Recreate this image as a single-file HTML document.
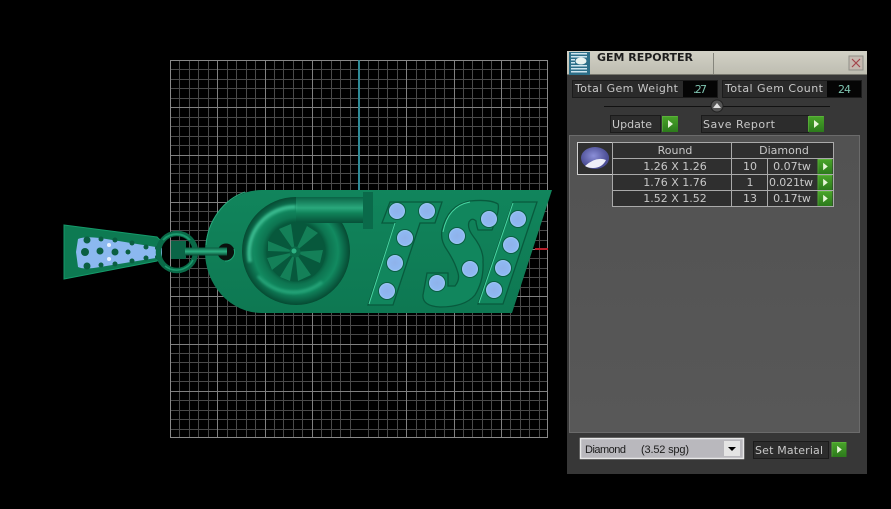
<!DOCTYPE html>
<html><head><meta charset="utf-8"><style>
html,body{margin:0;padding:0;background:#000;width:891px;height:509px;overflow:hidden}
svg{display:block}
text{font-family:"DejaVu Sans","Liberation Sans",sans-serif;font-size:11px;fill:#c8c8c8}
</style></head><body>
<svg width="891" height="509" viewBox="0 0 891 509" xmlns="http://www.w3.org/2000/svg">
<defs>
<linearGradient id="key" x1="0" y1="0" x2="0" y2="1"><stop offset="0" stop-color="#11855c"/><stop offset="1" stop-color="#0e7852"/></linearGradient>
<linearGradient id="pipe" x1="0" y1="0" x2="0" y2="1"><stop offset="0" stop-color="#0b6446"/><stop offset=".42" stop-color="#2aa87c"/><stop offset=".62" stop-color="#108259"/><stop offset="1" stop-color="#075138"/></linearGradient>
<linearGradient id="bar" x1="0" y1="0" x2="0" y2="1"><stop offset="0" stop-color="#0a5c40"/><stop offset=".5" stop-color="#2eb283"/><stop offset="1" stop-color="#084a33"/></linearGradient>
<radialGradient id="torus" cx="296" cy="251" r="54" gradientUnits="userSpaceOnUse"><stop offset=".54" stop-color="#075a3d"/><stop offset=".62" stop-color="#0d7450"/><stop offset=".78" stop-color="#128a60"/><stop offset=".92" stop-color="#0a6144"/><stop offset="1" stop-color="#064a32"/></radialGradient>
<radialGradient id="gemc"><stop offset="0" stop-color="#8fb2ea"/><stop offset=".75" stop-color="#8fb8f2"/><stop offset="1" stop-color="#a6cff6"/></radialGradient>
<linearGradient id="gb" x1="0" y1="0" x2="0" y2="1"><stop offset="0" stop-color="#4aa52a"/><stop offset="1" stop-color="#2c7a1c"/></linearGradient>
<linearGradient id="tb" x1="0" y1="0" x2="0" y2="1"><stop offset="0" stop-color="#d2d1c6"/><stop offset="1" stop-color="#bdbcb0"/></linearGradient>
<linearGradient id="pn" x1="0" y1="0" x2="0" y2="1"><stop offset="0" stop-color="#525252"/><stop offset="1" stop-color="#585858"/></linearGradient>
<radialGradient id="stone" cx=".45" cy=".4"><stop offset="0" stop-color="#8b8fd8"/><stop offset="1" stop-color="#4d4f96"/></radialGradient>
<filter id="b1" x="-20%" y="-20%" width="140%" height="140%"><feGaussianBlur stdDeviation="1.200"/></filter>
<symbol id="g" viewBox="0 0 16 16"><rect width="16" height="16" fill="url(#gb)"/><path d="M0 0H16L15 1H1V15L0 16Z" fill="#6cc04a" opacity=".5"/><path d="M6 4L11 8L6 12Z" fill="#e6f5d8"/></symbol>
</defs>

<!-- grid -->
<path fill="none" stroke="#4a4a4a" d="M179.500 60V438M189.500 60V438M198.500 60V438M208.500 60V438M227.500 60V438M236.500 60V438M246.500 60V438M255.500 60V438M274.500 60V438M283.500 60V438M293.500 60V438M302.500 60V438M321.500 60V438M331.500 60V438M340.500 60V438M350.500 60V438M368.500 60V438M378.500 60V438M387.500 60V438M397.500 60V438M416.500 60V438M425.500 60V438M435.500 60V438M444.500 60V438M463.500 60V438M472.500 60V438M482.500 60V438M491.500 60V438M510.500 60V438M520.500 60V438M529.500 60V438M539.500 60V438
M170 69.500H548M170 79.500H548M170 88.500H548M170 98.500H548M170 117.500H548M170 126.500H548M170 136.500H548M170 145.500H548M170 164.500H548M170 173.500H548M170 183.500H548M170 192.500H548M170 211.500H548M170 221.500H548M170 230.500H548M170 240.500H548M170 258.500H548M170 268.500H548M170 277.500H548M170 287.500H548M170 306.500H548M170 315.500H548M170 325.500H548M170 334.500H548M170 353.500H548M170 362.500H548M170 372.500H548M170 381.500H548M170 400.500H548M170 410.500H548M170 419.500H548M170 429.500H548"/>
<path fill="none" stroke="#808080" d="M217.500 60V438M265.500 60V438M312.500 60V438M406.500 60V438M454.500 60V438M501.500 60V438M170 107.500H548M170 155.500H548M170 202.500H548M170 249.500H548M170 296.500H548M170 344.500H548M170 391.500H548"/>
<rect x="170.500" y="60.500" width="377" height="377" fill="none" stroke="#8a8a8a"/>
<rect x="358" y="60" width="2" height="132" fill="#2f8a96"/>
<rect x="535" y="248" width="13" height="2" fill="#b8202c"/>

<!-- charm -->
<path d="M64 225L157 237L160 240V258L157 261L64 279Z" fill="#0d7a52" stroke="#149a6a" stroke-width="1"/>
<path d="M78 239Q84 236 100 238L162 248V257L100 267Q84 270 78 267L76 252Z" fill="#8bb8ef"/>
<g fill="#0a5f42">
<circle cx="85" cy="252" r="4"/><circle cx="87" cy="240" r="3.500"/><circle cx="87" cy="266" r="3.500"/><circle cx="100" cy="251" r="3.500"/><circle cx="101" cy="239" r="2.500"/><circle cx="101" cy="265" r="2.500"/><circle cx="115" cy="252" r="3.500"/><circle cx="115" cy="240" r="2.500"/><circle cx="115" cy="264" r="2.500"/><circle cx="128" cy="252" r="2.500"/><circle cx="132" cy="243" r="2.500"/><circle cx="132" cy="261" r="2.500"/><circle cx="146" cy="247" r="2.500"/><circle cx="146" cy="258" r="2.500"/><circle cx="157" cy="248" r="2"/><circle cx="157" cy="257" r="2"/>
</g>
<circle cx="109" cy="245" r="2" fill="#e8f2ff"/><circle cx="109" cy="259" r="2" fill="#e8f2ff"/>
<circle cx="177" cy="252" r="18.500" fill="none" stroke="#0a6a48" stroke-width="5.500"/>
<path d="M163 240A18.500 18.500 0 0 1 190 240" fill="none" stroke="#1c9a6e" stroke-width="2"/>
<path d="M165 266A18.500 18.500 0 0 0 193 260" fill="none" stroke="#1c9a6e" stroke-width="1.500"/>
<rect x="171" y="241" width="15" height="18" fill="#0b6547"/>

<!-- key body -->
<path d="M262 190H552L512 313H262A57 61.5 0 0 1 262 190Z" fill="url(#key)"/>
<path d="M206 245A57 61.5 0 0 1 245 192" fill="none" stroke="#28a87c" stroke-width="1"/>
<circle cx="226" cy="252" r="8.500" fill="#0a110d"/>
<path d="M234 249A9 9 0 0 1 225 261" fill="none" stroke="#1fa777" stroke-width="1"/>
<rect x="185" y="247.500" width="42" height="8" fill="url(#bar)"/>

<!-- turbo -->
<circle cx="296" cy="251" r="54" fill="url(#torus)"/>
<path d="M296 197H364V223H310L296 222Z" fill="url(#pipe)"/>
<path d="M250 262A46 46 0 0 1 296 207" fill="none" stroke="#3bbc90" stroke-width="4" filter="url(#b1)"/>
<path d="M258 276A46 46 0 0 0 322 282" fill="none" stroke="#25a67a" stroke-width="3" filter="url(#b1)"/>
<circle cx="296" cy="252" r="29.500" fill="#07583c"/>
<g fill="#148058">
<path d="M295 252L269 228L267 250Z" opacity=".0"/>
<path d="M295 252L267 243L269 232L283 230Z" opacity=".0"/>
<path d="M295 252L268 241L268 251Z"/><path d="M295 252L279 229L291 224Z"/><path d="M295 252L307 226L318 233Z"/><path d="M295 252L323 250L320 263Z"/><path d="M295 252L311 275L298 281Z"/><path d="M295 252L290 281L280 277Z"/><path d="M295 252L272 270L267 258Z"/>
</g>
<circle cx="295" cy="252" r="5.500" fill="#0b6a48"/><circle cx="294" cy="251" r="2.500" fill="#2eb283"/>
<rect x="363" y="192" width="10" height="37" fill="#0a6a4a"/>

<!-- letters -->
<g fill="#11865d" stroke="#085a3d" stroke-width="1.300">
<path d="M390 202H442L435 223H420L393 305H368L395 223H382Z"/>
<path d="M498 204Q500 210 492 230H478Q476 224 476 221Q472 217 469 222Q467 228 473 236Q484 250 483 262Q484 280 475 295Q465 307 440 307Q422 306 423 295L427 273H448V286H455Q460 280 458 273Q455 262 447 250Q440 240 442 230Q448 205 470 201Q490 199 498 204Z"/>
<path d="M513 202H537L503 304H478Z"/>
</g>
<path d="M395 223L369 304M513 203L479 303M443 232Q448 206 470 202" fill="none" stroke="#49d6a3" stroke-width="1"/>
<g fill="url(#gemc)" stroke="#0a5f42">
<circle cx="397" cy="211" r="8.500"/><circle cx="427" cy="211" r="8.500"/><circle cx="405" cy="238" r="8.500"/><circle cx="395" cy="263" r="8.500"/><circle cx="387" cy="291" r="8.500"/>
<circle cx="489" cy="219" r="8.500"/><circle cx="457" cy="236" r="8.500"/><circle cx="470" cy="269" r="8.500"/><circle cx="437" cy="283" r="8.500"/>
<circle cx="518" cy="219" r="8.500"/><circle cx="511" cy="245" r="8.500"/><circle cx="503" cy="268" r="8.500"/><circle cx="494" cy="290" r="8.500"/>
</g>

<!-- panel -->
<rect x="567" y="51" width="300" height="423" fill="#373737"/>
<rect x="567" y="51" width="300" height="24" fill="url(#tb)"/>
<rect x="567" y="74" width="300" height="1" fill="#77776e"/>
<rect x="713" y="53" width="1" height="21" fill="#85857c"/>
<rect x="569" y="52" width="21" height="23" fill="#2d6f88"/>
<g fill="#cfe6ef"><rect x="571" y="53" width="16" height="1.500"/><rect x="571" y="56" width="16" height="1.500"/><rect x="571" y="59" width="4" height="1.500"/><rect x="571" y="62" width="4" height="1.500"/><rect x="571" y="65" width="16" height="1.500"/><rect x="571" y="68" width="16" height="1.500"/><rect x="571" y="71" width="16" height="1.500"/></g>
<ellipse cx="581" cy="61" rx="5.500" ry="3.500" fill="#e9f2ee"/>
<rect x="849" y="56" width="14" height="14" fill="#c6b9b0" stroke="#8f8f88"/>
<path d="M852 59L860 67M860 59L852 67" stroke="#a4444a" stroke-width="1.200"/>
<text x="597" y="61" style="font-weight:bold;font-size:11px;fill:#1d1d1d" textLength="96" lengthAdjust="spacingAndGlyphs">GEM REPORTER</text>

<!-- totals -->
<rect x="572.500" y="80.500" width="145" height="17" fill="#2a2a2a" stroke="#1b1b1b"/>
<rect x="683" y="81" width="34" height="16" fill="#050505"/>
<text x="575" y="92" textLength="103">Total Gem Weight</text>
<text x="693" y="93" style="fill:#7fc4b0" textLength="14">.27</text>
<rect x="722.500" y="80.500" width="139" height="17" fill="#2a2a2a" stroke="#1b1b1b"/>
<rect x="827" y="81" width="34" height="16" fill="#050505"/>
<text x="725" y="92" textLength="98">Total Gem Count</text>
<text x="838" y="93" style="fill:#7fc4b0" textLength="13">24</text>

<!-- slider -->
<rect x="604" y="106" width="226" height="1" fill="#111"/>
<circle cx="717" cy="106" r="6" fill="#555" stroke="#222"/>
<path d="M713 108L717 103L721 108Z" fill="#e0e0e0"/>

<!-- buttons -->
<rect x="610.500" y="115.500" width="50" height="17" fill="#2c2c2c" stroke="#1b1b1b"/>
<text x="612" y="128" textLength="40">Update</text>
<use href="#g" x="662" y="116" width="16" height="16"/>
<rect x="701.500" y="115.500" width="107" height="17" fill="#2c2c2c" stroke="#1b1b1b"/>
<text x="703" y="128" textLength="72">Save Report</text>
<use href="#g" x="808" y="116" width="16" height="16"/>

<!-- inner panel -->
<rect x="569" y="135" width="291" height="298" fill="url(#pn)"/>
<rect x="569.500" y="135.500" width="290" height="297" fill="none" stroke="#6b6b6b"/>

<!-- table -->
<rect x="577.500" y="142.500" width="35" height="32" fill="#2f2f2f" stroke="#d0d0d0"/>
<ellipse cx="595" cy="158" rx="14" ry="11" fill="url(#stone)"/>
<path d="M585 166Q596 156 606 160Q602 168 593 168Q588 168 585 166Z" fill="#eeeef8"/>
<rect x="612.500" y="142.500" width="221" height="64" fill="#2f2f2f" stroke="#aaa"/>
<path d="M612 158.500H833M612 174.500H833M612 190.500H833M731.500 142V206M767.500 158V206" stroke="#aaa" fill="none"/>
<g text-anchor="middle">
<text x="675" y="154">Round</text><text x="784" y="154">Diamond</text>
<text x="675" y="170">1.26 X 1.26</text><text x="750" y="170">10</text><text x="792" y="170">0.07tw</text>
<text x="675" y="186">1.76 X 1.76</text><text x="750" y="186">1</text><text x="791" y="186" textLength="44">0.021tw</text>
<text x="675" y="202">1.52 X 1.52</text><text x="750" y="202">13</text><text x="792" y="202">0.17tw</text>
</g>
<use href="#g" x="817" y="159" width="16" height="15"/>
<use href="#g" x="817" y="175" width="16" height="15"/>
<use href="#g" x="817" y="191" width="16" height="15"/>

<!-- bottom -->
<rect x="580.500" y="438.500" width="163" height="20" fill="#b9b8bd" stroke="#e8e8e8" stroke-width="1.500"/>
<text x="585" y="453" style="fill:#1c1c1c;font-family:'Liberation Sans',sans-serif" textLength="41">Diamond</text>
<text x="641" y="453" style="fill:#1c1c1c;font-family:'Liberation Sans',sans-serif" textLength="48">(3.52 spg)</text>
<rect x="724" y="441" width="16" height="15" fill="#e4e4e4"/>
<path d="M728 447H736L732 451Z" fill="#000"/>
<rect x="753.500" y="441.500" width="75" height="17" fill="#2c2c2c" stroke="#1b1b1b"/>
<text x="755" y="454" textLength="68">Set Material</text>
<use href="#g" x="831" y="442" width="16" height="15"/>
</svg>
</body></html>
